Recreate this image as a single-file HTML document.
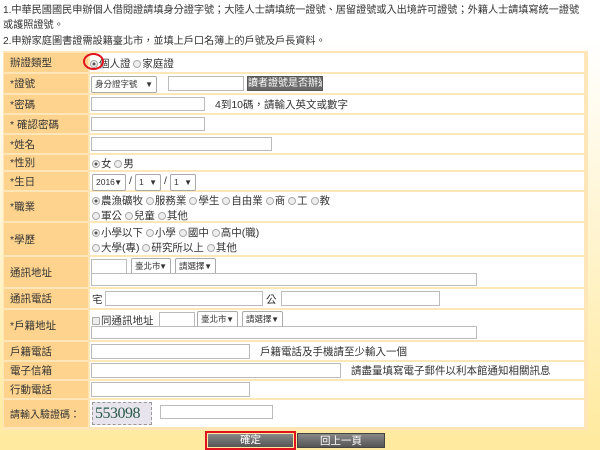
<!DOCTYPE html>
<html><head><meta charset="utf-8">
<style>
*{margin:0;padding:0;box-sizing:border-box}
body{width:600px;height:450px;overflow:hidden;position:relative;font-family:"Liberation Sans","Noto Sans CJK TC",sans-serif;font-size:10.5px;color:#333;background:linear-gradient(#fff 0px,#fff 40px,#fff6d8 200px,#ffeba3 420px,#ffea9f 450px)}
.a{position:absolute;white-space:nowrap}
.top{left:3px;line-height:15px;font-size:10.2px;letter-spacing:-0.05px}
.tbl{position:absolute;left:3px;top:51px;width:585px;height:379px;background:#ffe6b8}
.l{position:absolute;left:4px;width:84px;background:#fdd38e;padding-left:6px;display:flex;align-items:center;white-space:nowrap;font-size:10.5px}
.v{position:absolute;left:90px;width:494px;background:#fff}
.in{position:absolute;border:1px solid #bbb;background:#fff;height:15px}
.sel{position:absolute;border:1px solid #aaa;background:#fff;height:17px;font-size:8.5px;line-height:15px;padding-left:3px;border-radius:2px;overflow:hidden;white-space:nowrap}
.sel b{position:absolute;right:3px;top:0;font-weight:normal;font-size:8px}
.r{display:inline-block;width:8px;height:8px;border-radius:50%;border:1px solid #aaa;background:#eee;vertical-align:-1px;margin-right:1px}
.r.c{background:radial-gradient(#555 30%,#eee 40%)}
.btn{position:absolute;background:linear-gradient(#888,#555);color:#fff;text-align:center;font-size:10.5px;line-height:14px;white-space:nowrap;overflow:hidden}
</style></head><body>
<div class="a top" style="top:3px">1.中華民國國民申辦個人借閱證請填身分證字號；大陸人士請填統一證號、居留證號或入出境許可證號；外籍人士請填寫統一證號</div>
<div class="a top" style="top:18px">或護照證號。</div>
<div class="a top" style="top:34px">2.申辦家庭圖書證需設籍臺北市，並填上戶口名簿上的戶號及戶長資料。</div>

<div class="tbl"></div>
<div class="l" style="top:53px;height:19px">辦證類型</div><div class="v" style="top:53px;height:19px"></div>
<div class="l" style="top:74px;height:19px">*證號</div><div class="v" style="top:74px;height:19px"></div>
<div class="l" style="top:95px;height:18px">*密碼</div><div class="v" style="top:95px;height:18px"></div>
<div class="l" style="top:115px;height:18px">* 確認密碼</div><div class="v" style="top:115px;height:18px"></div>
<div class="l" style="top:135px;height:18px">*姓名</div><div class="v" style="top:135px;height:18px"></div>
<div class="l" style="top:155px;height:15px">*性別</div><div class="v" style="top:155px;height:15px"></div>
<div class="l" style="top:172px;height:18px">*生日</div><div class="v" style="top:172px;height:18px"></div>
<div class="l" style="top:192px;height:29px">*職業</div><div class="v" style="top:192px;height:29px"></div>
<div class="l" style="top:223px;height:32px">*學歷</div><div class="v" style="top:223px;height:32px"></div>
<div class="l" style="top:257px;height:30px">通訊地址</div><div class="v" style="top:257px;height:30px"></div>
<div class="l" style="top:289px;height:19px">通訊電話</div><div class="v" style="top:289px;height:19px"></div>
<div class="l" style="top:310px;height:30px">*戶籍地址</div><div class="v" style="top:310px;height:30px"></div>
<div class="l" style="top:342px;height:18px">戶籍電話</div><div class="v" style="top:342px;height:18px"></div>
<div class="l" style="top:362px;height:17px">電子信箱</div><div class="v" style="top:362px;height:17px"></div>
<div class="l" style="top:381px;height:17px">行動電話</div><div class="v" style="top:381px;height:17px"></div>
<div class="l" style="top:400px;height:27px;font-size:10px">請輸入驗證碼：</div><div class="v" style="top:400px;height:27px"></div>

<div class="a" style="left:90px;top:56px"><span class="r c"></span>個人證 <span class="r"></span>家庭證</div>
<div class="a" style="left:83px;top:53px;width:21px;height:17px;border:2.5px solid #e0121b;border-radius:50%"></div>

<div class="sel" style="left:91px;top:76px;width:66px">身分證字號<b>▼</b></div>
<div class="in" style="left:168px;top:76px;width:76px"></div>
<div class="btn" style="left:247px;top:76px;width:76px;height:15px;background:#6a6a6a;border:1px solid #555;font-size:10px">讀者證號是否辦過</div>

<div class="in" style="left:91px;top:97px;width:114px;height:14px"></div>
<div class="a" style="left:215px;top:97px">4到10碼，請輸入英文或數字</div>
<div class="in" style="left:91px;top:117px;width:114px;height:14px"></div>
<div class="in" style="left:91px;top:137px;width:181px;height:14px"></div>

<div class="a" style="left:92px;top:156px"><span class="r c"></span>女 <span class="r"></span>男</div>

<div class="sel" style="left:92px;top:174px;width:34px">2016<b>▼</b></div>
<div class="a" style="left:129px;top:175px">/</div>
<div class="sel" style="left:135px;top:174px;width:26px">1<b>▼</b></div>
<div class="a" style="left:164px;top:175px">/</div>
<div class="sel" style="left:170px;top:174px;width:26px">1<b>▼</b></div>

<div class="a" style="left:92px;top:194px;line-height:15px"><span class="r c"></span>農漁礦牧 <span class="r"></span>服務業 <span class="r"></span>學生 <span class="r"></span>自由業 <span class="r"></span>商 <span class="r"></span>工 <span class="r"></span>教<br><span class="r"></span>軍公 <span class="r"></span>兒童 <span class="r"></span>其他</div>
<div class="a" style="left:92px;top:226px;line-height:15px"><span class="r c"></span>小學以下 <span class="r"></span>小學 <span class="r"></span>國中 <span class="r"></span>高中(職)<br><span class="r"></span>大學(專) <span class="r"></span>研究所以上 <span class="r"></span>其他</div>

<div class="in" style="left:91px;top:259px;width:36px"></div>
<div class="sel" style="left:131px;top:258px;width:40px">臺北市<b>▼</b></div>
<div class="sel" style="left:175px;top:258px;width:41px">請選擇<b>▼</b></div>
<div class="in" style="left:91px;top:273px;width:386px;height:13px"></div>

<div class="a" style="left:92px;top:292px">宅</div>
<div class="in" style="left:105px;top:291px;width:158px"></div>
<div class="a" style="left:266px;top:292px">公</div>
<div class="in" style="left:281px;top:291px;width:159px"></div>

<div class="a" style="left:92px;top:313px"><span class="r" style="border-radius:1px"></span>同通訊地址</div>
<div class="in" style="left:159px;top:312px;width:36px"></div>
<div class="sel" style="left:197px;top:311px;width:41px">臺北市<b>▼</b></div>
<div class="sel" style="left:242px;top:311px;width:41px">請選擇<b>▼</b></div>
<div class="in" style="left:91px;top:326px;width:386px;height:13px"></div>

<div class="in" style="left:91px;top:344px;width:159px"></div>
<div class="a" style="left:260px;top:344px">戶籍電話及手機請至少輸入一個</div>
<div class="in" style="left:91px;top:363px;width:250px"></div>
<div class="a" style="left:351px;top:363px">請盡量填寫電子郵件以利本館通知相關訊息</div>
<div class="in" style="left:91px;top:382px;width:159px"></div>

<div class="a" style="left:92px;top:402px;width:60px;height:23px;border:1px dashed #999;background:#e8e4ee;font-family:'Liberation Serif',serif;font-size:16px;line-height:21px;color:#2a5a4a;padding-left:2px;letter-spacing:-0.5px;overflow:hidden">553098</div>
<div class="in" style="left:160px;top:405px;width:113px;height:14px"></div>

<div class="a" style="left:205px;top:431px;width:91px;height:19px;border:2px solid #e0121b"></div>
<div class="btn" style="left:208px;top:434px;width:85px;height:13px;line-height:13px">確定</div>
<div class="btn" style="left:297px;top:433px;width:88px;height:15px;border:1px solid #444">回上一頁</div>
</body></html>
